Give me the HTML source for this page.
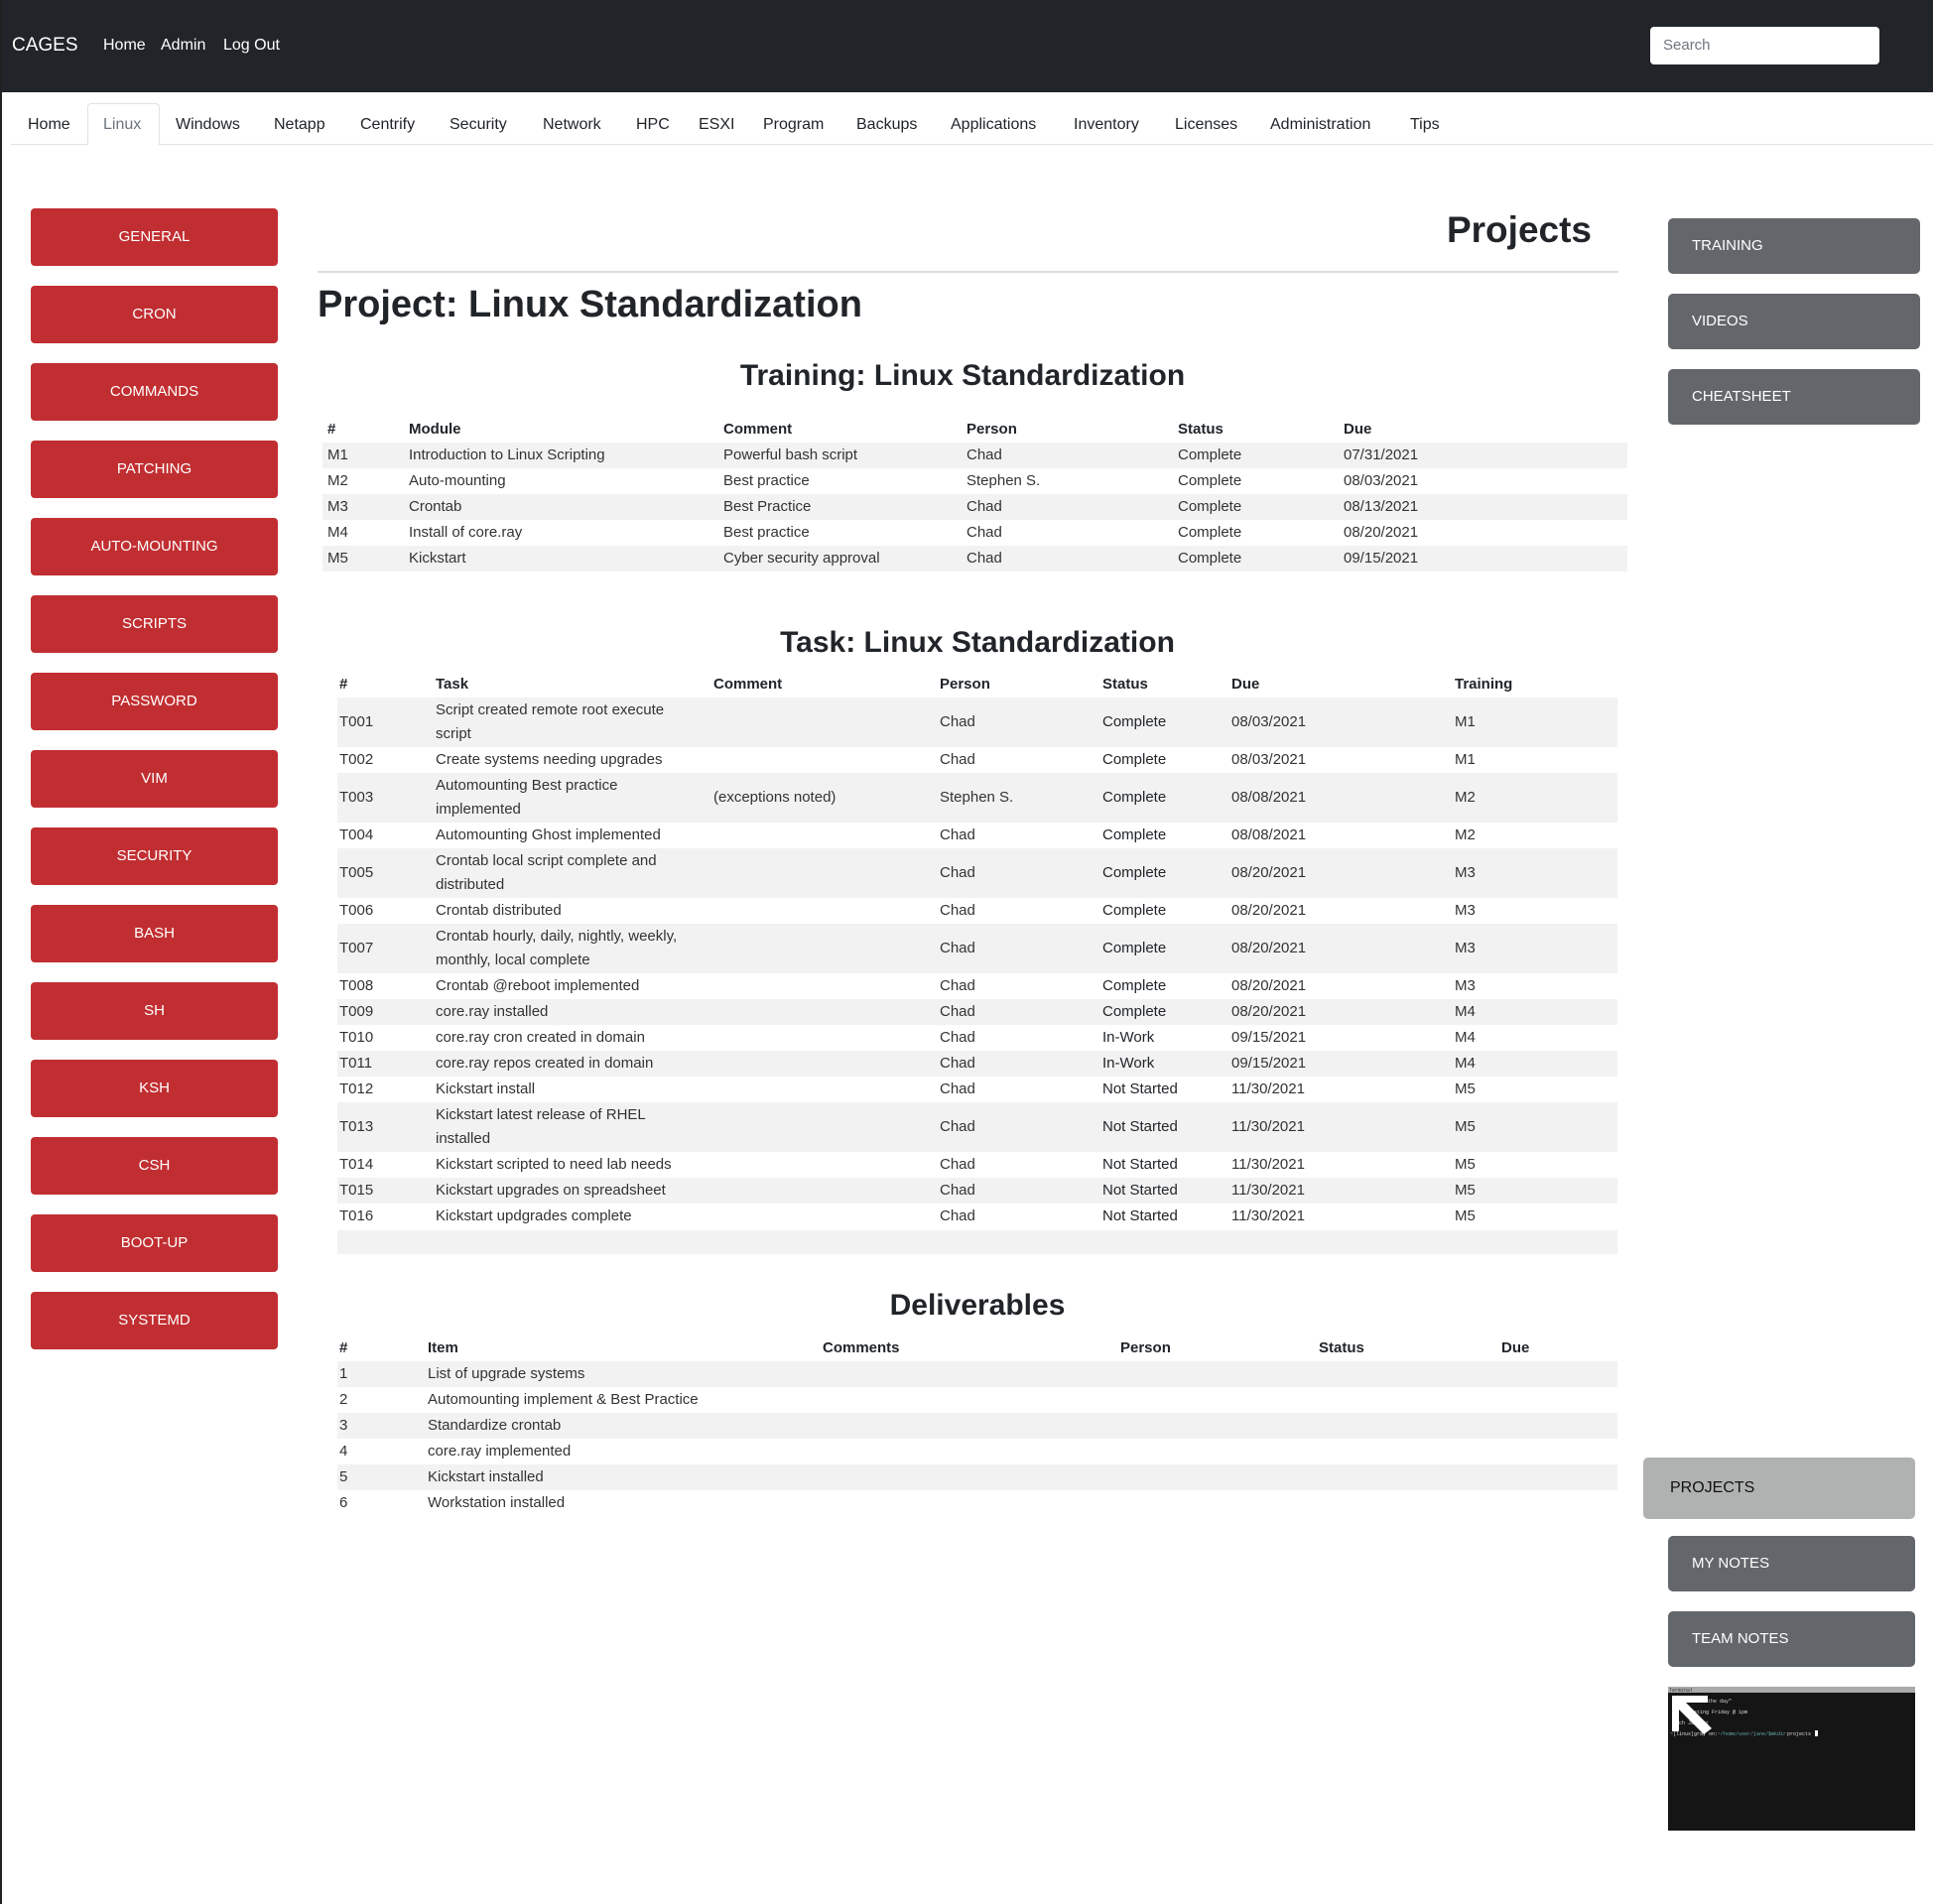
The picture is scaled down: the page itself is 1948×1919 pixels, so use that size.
<!DOCTYPE html>
<html><head><meta charset="utf-8"><style>
*{margin:0;padding:0;box-sizing:border-box}
body{width:1948px;height:1919px;position:relative;background:#fff;font-family:"Liberation Sans",sans-serif;color:#212529;overflow:hidden}
.nav{position:absolute;left:0;top:0;width:1948px;height:93px;background:#212529;color:#fff}
.abs{position:absolute;white-space:nowrap}
.tab{position:absolute;top:117px;font-size:16px;color:#212529}
.rb{position:absolute;left:31px;width:249px;height:58px;background:#c12e31;border-radius:4px;color:#fff;font-size:15px;text-align:center;line-height:58px}
.gb{position:absolute;background:#63666a;border-radius:5px;color:#fff;font-size:15px;padding-left:24px}
.row{position:absolute;height:26px;font-size:15px;color:#333}
.row.g{background:#f2f2f2}
.row span{position:absolute;top:0;white-space:nowrap}
.hd span{font-weight:bold;color:#212529}
h1,h2{position:absolute;white-space:nowrap;font-weight:bold;color:#212529}
</style></head><body>
<div class="abs" style="left:0;top:0;width:2px;height:1919px;background:#222;z-index:5"></div>
<div class="nav">
<div class="abs" style="left:12px;top:35px;font-size:19px">CAGES</div>
<div class="abs" style="left:104px;top:37px;font-size:16px">Home</div>
<div class="abs" style="left:162px;top:37px;font-size:16px">Admin</div>
<div class="abs" style="left:225px;top:37px;font-size:16px">Log Out</div>
<div class="abs" style="left:1663px;top:27px;width:231px;height:38px;background:#fff;border-radius:4px;color:#6c757d;font-size:15px;padding:10px 13px">Search</div>
</div>
<div class="abs" style="left:11px;top:145px;width:1937px;height:1px;background:#dee2e6"></div>
<div class="abs" style="left:88px;top:104px;width:73px;height:42px;background:#fff;border:1px solid #dee2e6;border-bottom:none;border-radius:4px 4px 0 0"></div>
<div class="tab" style="left:28px">Home</div>
<div class="tab" style="left:104px;color:#6c757d">Linux</div>
<div class="tab" style="left:177px">Windows</div>
<div class="tab" style="left:276px">Netapp</div>
<div class="tab" style="left:363px">Centrify</div>
<div class="tab" style="left:453px">Security</div>
<div class="tab" style="left:547px">Network</div>
<div class="tab" style="left:641px">HPC</div>
<div class="tab" style="left:704px">ESXI</div>
<div class="tab" style="left:769px">Program</div>
<div class="tab" style="left:863px">Backups</div>
<div class="tab" style="left:958px">Applications</div>
<div class="tab" style="left:1082px">Inventory</div>
<div class="tab" style="left:1184px">Licenses</div>
<div class="tab" style="left:1280px">Administration</div>
<div class="tab" style="left:1421px">Tips</div>

<div class="rb" style="top:210px">GENERAL</div>
<div class="rb" style="top:288px">CRON</div>
<div class="rb" style="top:366px">COMMANDS</div>
<div class="rb" style="top:444px">PATCHING</div>
<div class="rb" style="top:522px">AUTO-MOUNTING</div>
<div class="rb" style="top:600px">SCRIPTS</div>
<div class="rb" style="top:678px">PASSWORD</div>
<div class="rb" style="top:756px">VIM</div>
<div class="rb" style="top:834px">SECURITY</div>
<div class="rb" style="top:912px">BASH</div>
<div class="rb" style="top:990px">SH</div>
<div class="rb" style="top:1068px">KSH</div>
<div class="rb" style="top:1146px">CSH</div>
<div class="rb" style="top:1224px">BOOT-UP</div>
<div class="rb" style="top:1302px">SYSTEMD</div>

<h1 style="right:344px;top:211px;font-size:37px">Projects</h1>
<div class="abs" style="left:320px;top:273px;width:1311px;height:2px;background:#ddd"></div>
<h1 style="left:320px;top:286px;font-size:38px">Project: Linux Standardization</h1>
<h2 style="left:722px;top:362px;font-size:30px;width:496px;text-align:center">Training: Linux Standardization</h2>

<div class="row hd" style="left:325px;top:420px;width:1315px;line-height:26px"><span style="left:5px">#</span><span style="left:87px">Module</span><span style="left:404px">Comment</span><span style="left:649px">Person</span><span style="left:862px">Status</span><span style="left:1029px">Due</span></div>
<div class="row g" style="left:325px;top:446px;width:1315px;line-height:26px"><span style="left:5px">M1</span><span style="left:87px">Introduction to Linux Scripting</span><span style="left:404px">Powerful bash script</span><span style="left:649px">Chad</span><span style="left:862px">Complete</span><span style="left:1029px">07/31/2021</span></div>
<div class="row" style="left:325px;top:472px;width:1315px;line-height:26px"><span style="left:5px">M2</span><span style="left:87px">Auto-mounting</span><span style="left:404px">Best practice</span><span style="left:649px">Stephen S.</span><span style="left:862px">Complete</span><span style="left:1029px">08/03/2021</span></div>
<div class="row g" style="left:325px;top:498px;width:1315px;line-height:26px"><span style="left:5px">M3</span><span style="left:87px">Crontab</span><span style="left:404px">Best Practice</span><span style="left:649px">Chad</span><span style="left:862px">Complete</span><span style="left:1029px">08/13/2021</span></div>
<div class="row" style="left:325px;top:524px;width:1315px;line-height:26px"><span style="left:5px">M4</span><span style="left:87px">Install of core.ray</span><span style="left:404px">Best practice</span><span style="left:649px">Chad</span><span style="left:862px">Complete</span><span style="left:1029px">08/20/2021</span></div>
<div class="row g" style="left:325px;top:550px;width:1315px;line-height:26px"><span style="left:5px">M5</span><span style="left:87px">Kickstart</span><span style="left:404px">Cyber security approval</span><span style="left:649px">Chad</span><span style="left:862px">Complete</span><span style="left:1029px">09/15/2021</span></div>

<h2 style="left:715px;top:631px;font-size:30px;width:540px;text-align:center">Task: Linux Standardization</h2>

<div class="row hd" style="left:340px;top:677px;width:1290px;line-height:26px"><span style="left:2px">#</span><span style="left:99px">Task</span><span style="left:379px">Comment</span><span style="left:607px">Person</span><span style="left:771px">Status</span><span style="left:901px">Due</span><span style="left:1126px">Training</span></div>
<div class="row g" style="left:340px;top:703px;width:1290px;height:50px;line-height:50px"><span style="left:2px">T001</span><span style="left:99px;line-height:24px;top:1px">Script created remote root execute<br>script</span><span style="left:607px">Chad</span><span style="left:771px;color:#212529">Complete</span><span style="left:901px">08/03/2021</span><span style="left:1126px">M1</span></div>
<div class="row" style="left:340px;top:753px;width:1290px;line-height:26px"><span style="left:2px">T002</span><span style="left:99px">Create systems needing upgrades</span><span style="left:607px">Chad</span><span style="left:771px;color:#212529">Complete</span><span style="left:901px">08/03/2021</span><span style="left:1126px">M1</span></div>
<div class="row g" style="left:340px;top:779px;width:1290px;height:50px;line-height:50px"><span style="left:2px">T003</span><span style="left:99px;line-height:24px;top:1px">Automounting Best practice<br>implemented</span><span style="left:379px">(exceptions noted)</span><span style="left:607px">Stephen S.</span><span style="left:771px;color:#212529">Complete</span><span style="left:901px">08/08/2021</span><span style="left:1126px">M2</span></div>
<div class="row" style="left:340px;top:829px;width:1290px;line-height:26px"><span style="left:2px">T004</span><span style="left:99px">Automounting Ghost implemented</span><span style="left:607px">Chad</span><span style="left:771px;color:#212529">Complete</span><span style="left:901px">08/08/2021</span><span style="left:1126px">M2</span></div>
<div class="row g" style="left:340px;top:855px;width:1290px;height:50px;line-height:50px"><span style="left:2px">T005</span><span style="left:99px;line-height:24px;top:1px">Crontab local script complete and<br>distributed</span><span style="left:607px">Chad</span><span style="left:771px;color:#212529">Complete</span><span style="left:901px">08/20/2021</span><span style="left:1126px">M3</span></div>
<div class="row" style="left:340px;top:905px;width:1290px;line-height:26px"><span style="left:2px">T006</span><span style="left:99px">Crontab distributed</span><span style="left:607px">Chad</span><span style="left:771px;color:#212529">Complete</span><span style="left:901px">08/20/2021</span><span style="left:1126px">M3</span></div>
<div class="row g" style="left:340px;top:931px;width:1290px;height:50px;line-height:50px"><span style="left:2px">T007</span><span style="left:99px;line-height:24px;top:1px">Crontab hourly, daily, nightly, weekly,<br>monthly, local complete</span><span style="left:607px">Chad</span><span style="left:771px;color:#212529">Complete</span><span style="left:901px">08/20/2021</span><span style="left:1126px">M3</span></div>
<div class="row" style="left:340px;top:981px;width:1290px;line-height:26px"><span style="left:2px">T008</span><span style="left:99px">Crontab @reboot implemented</span><span style="left:607px">Chad</span><span style="left:771px;color:#212529">Complete</span><span style="left:901px">08/20/2021</span><span style="left:1126px">M3</span></div>
<div class="row g" style="left:340px;top:1007px;width:1290px;line-height:26px"><span style="left:2px">T009</span><span style="left:99px">core.ray installed</span><span style="left:607px">Chad</span><span style="left:771px;color:#212529">Complete</span><span style="left:901px">08/20/2021</span><span style="left:1126px">M4</span></div>
<div class="row" style="left:340px;top:1033px;width:1290px;line-height:26px"><span style="left:2px">T010</span><span style="left:99px">core.ray cron created in domain</span><span style="left:607px">Chad</span><span style="left:771px;color:#212529">In-Work</span><span style="left:901px">09/15/2021</span><span style="left:1126px">M4</span></div>
<div class="row g" style="left:340px;top:1059px;width:1290px;line-height:26px"><span style="left:2px">T011</span><span style="left:99px">core.ray repos created in domain</span><span style="left:607px">Chad</span><span style="left:771px;color:#212529">In-Work</span><span style="left:901px">09/15/2021</span><span style="left:1126px">M4</span></div>
<div class="row" style="left:340px;top:1085px;width:1290px;line-height:26px"><span style="left:2px">T012</span><span style="left:99px">Kickstart install</span><span style="left:607px">Chad</span><span style="left:771px;color:#212529">Not Started</span><span style="left:901px">11/30/2021</span><span style="left:1126px">M5</span></div>
<div class="row g" style="left:340px;top:1111px;width:1290px;height:50px;line-height:50px"><span style="left:2px">T013</span><span style="left:99px;line-height:24px;top:1px">Kickstart latest release of RHEL<br>installed</span><span style="left:607px">Chad</span><span style="left:771px;color:#212529">Not Started</span><span style="left:901px">11/30/2021</span><span style="left:1126px">M5</span></div>
<div class="row" style="left:340px;top:1161px;width:1290px;line-height:26px"><span style="left:2px">T014</span><span style="left:99px">Kickstart scripted to need lab needs</span><span style="left:607px">Chad</span><span style="left:771px;color:#212529">Not Started</span><span style="left:901px">11/30/2021</span><span style="left:1126px">M5</span></div>
<div class="row g" style="left:340px;top:1187px;width:1290px;line-height:26px"><span style="left:2px">T015</span><span style="left:99px">Kickstart upgrades on spreadsheet</span><span style="left:607px">Chad</span><span style="left:771px;color:#212529">Not Started</span><span style="left:901px">11/30/2021</span><span style="left:1126px">M5</span></div>
<div class="row" style="left:340px;top:1213px;width:1290px;line-height:26px"><span style="left:2px">T016</span><span style="left:99px">Kickstart updgrades complete</span><span style="left:607px">Chad</span><span style="left:771px;color:#212529">Not Started</span><span style="left:901px">11/30/2021</span><span style="left:1126px">M5</span></div>
<div class="row g" style="left:340px;top:1240px;width:1290px;height:24px"></div>

<h2 style="left:735px;top:1299px;font-size:30px;width:500px;text-align:center">Deliverables</h2>
<div class="row hd" style="left:340px;top:1346px;width:1290px;line-height:26px"><span style="left:2px">#</span><span style="left:91px">Item</span><span style="left:489px">Comments</span><span style="left:789px">Person</span><span style="left:989px">Status</span><span style="left:1173px">Due</span></div>
<div class="row g" style="left:340px;top:1372px;width:1290px;line-height:26px"><span style="left:2px">1</span><span style="left:91px">List of upgrade systems</span></div>
<div class="row" style="left:340px;top:1398px;width:1290px;line-height:26px"><span style="left:2px">2</span><span style="left:91px">Automounting implement &amp; Best Practice</span></div>
<div class="row g" style="left:340px;top:1424px;width:1290px;line-height:26px"><span style="left:2px">3</span><span style="left:91px">Standardize crontab</span></div>
<div class="row" style="left:340px;top:1450px;width:1290px;line-height:26px"><span style="left:2px">4</span><span style="left:91px">core.ray implemented</span></div>
<div class="row g" style="left:340px;top:1476px;width:1290px;line-height:26px"><span style="left:2px">5</span><span style="left:91px">Kickstart installed</span></div>
<div class="row" style="left:340px;top:1502px;width:1290px;line-height:26px"><span style="left:2px">6</span><span style="left:91px">Workstation installed</span></div>

<div class="gb" style="left:1681px;top:220px;width:254px;height:56px;line-height:56px">TRAINING</div>
<div class="gb" style="left:1681px;top:296px;width:254px;height:56px;line-height:56px">VIDEOS</div>
<div class="gb" style="left:1681px;top:372px;width:254px;height:56px;line-height:56px">CHEATSHEET</div>
<div class="gb" style="left:1656px;top:1469px;width:274px;height:62px;line-height:62px;background:#b0b2b1;color:#111;font-size:16px;padding-left:27px">PROJECTS</div>
<div class="gb" style="left:1681px;top:1548px;width:249px;height:56px;line-height:56px">MY NOTES</div>
<div class="gb" style="left:1681px;top:1624px;width:249px;height:56px;line-height:56px">TEAM NOTES</div>
<svg class="abs" style="left:1681px;top:1700px" width="249" height="145" viewBox="0 0 249 145">
<rect width="249" height="145" fill="#151515"/>
<rect width="249" height="6" fill="#aaa"/>
<text x="1" y="5" font-size="5" fill="#333" font-family="Liberation Mono">Terminal</text>
<g font-family="Liberation Mono" font-size="5" fill="#ddd">
<text x="40" y="16">the day"</text>
<text x="26" y="27">sting Friday @ 1pm</text>
<text x="5" y="38">atch      Jan 1st</text>
<text x="2" y="49">~[linux]gray   on:</text><text x="50" y="49" fill="#6aa">~/home/user/jane/$mkdir</text><text x="120" y="49">projects</text>
</g>
<rect x="148" y="44" width="3" height="6" fill="#fff"/>
<path d="M4 9 H40 V16 H18 L44 42 L36 48 L11 23 V45 H4 Z" fill="#fff"/>
</svg>
</body></html>
